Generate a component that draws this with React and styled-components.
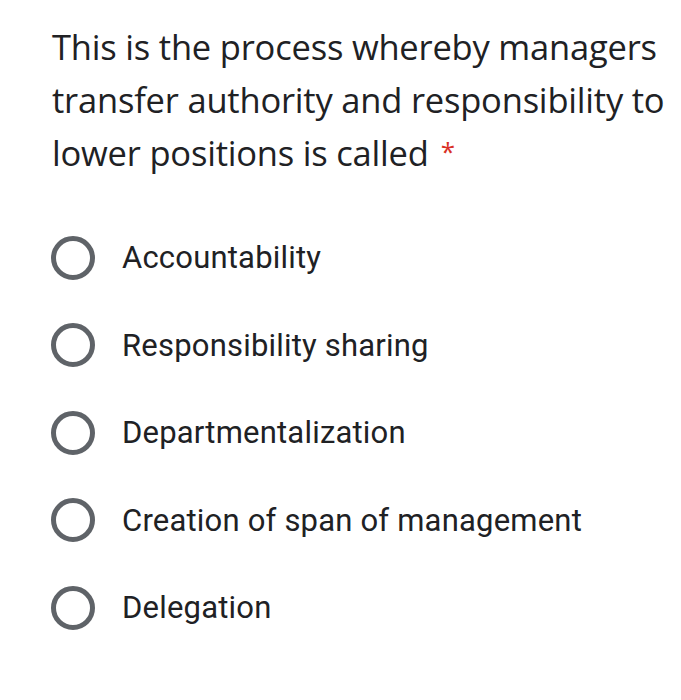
import React from 'react';
import styled, { createGlobalStyle } from 'styled-components';

const GlobalStyle = createGlobalStyle`
  html, body {
    margin: 0;
    padding: 0;
    background: #ffffff;
  }
`;

const Container = styled.div`
  width: 681px;
  height: 700px;
  box-sizing: border-box;
  padding: 20px 0 0 52px;
  background: #ffffff;
  overflow: hidden;
`;

const Question = styled.div`
  font-family: "Open Sans", sans-serif;
  font-size: 34.5px;
  line-height: 53px;
  color: #202124;
  letter-spacing: -0.2px;
  margin-bottom: 35px;
`;

const Required = styled.span`
  display: inline-block;
  color: #d93025;
  margin-left: 12px;
  font-size: 26px;
  line-height: 1;
  vertical-align: 5px;
`;

const Options = styled.div`
  display: flex;
  flex-direction: column;
`;

const Option = styled.label`
  display: flex;
  align-items: center;
  height: 87.5px;
`;

const Radio = styled.span`
  width: 44px;
  height: 44px;
  box-sizing: border-box;
  border: 5px solid #5f6368;
  border-radius: 50%;
  flex-shrink: 0;
  margin-left: -1px;
`;

const OptionText = styled.span`
  margin-left: 27px;
  font-family: Roboto, sans-serif;
  font-size: 31px;
  color: #202124;
  letter-spacing: 0.2px;
`;

const options = [
  'Accountability',
  'Responsibility sharing',
  'Departmentalization',
  'Creation of span of management',
  'Delegation',
];

const App = () => (
  <Container>
    <GlobalStyle />
    <Question>
      This is the process whereby managers transfer authority and responsibility to lower positions is called
      <Required>*</Required>
    </Question>
    <Options>
      {options.map((o) => (
        <Option key={o}>
          <Radio />
          <OptionText>{o}</OptionText>
        </Option>
      ))}
    </Options>
  </Container>
);

export default App;
